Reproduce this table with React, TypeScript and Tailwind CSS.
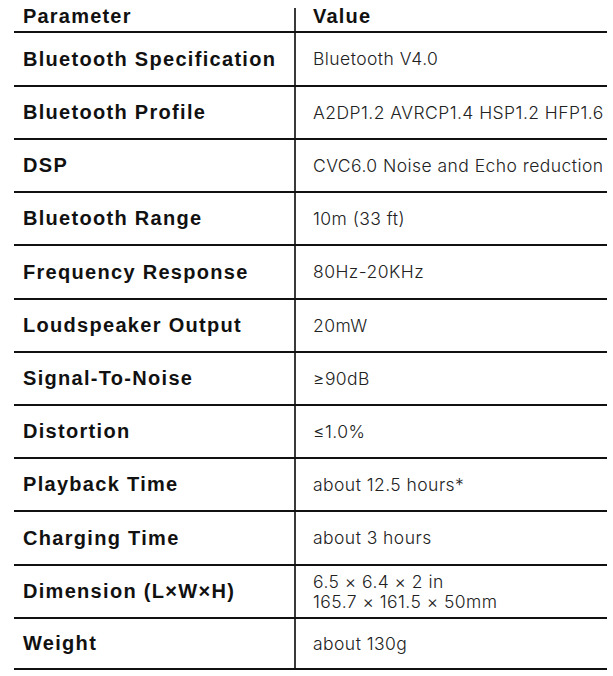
import React from "react";

type Row = { label: string; value: React.ReactNode; h: string };

const rows: Row[] = [
  { label: "Bluetooth Specification", value: "Bluetooth V4.0", h: "h-[54px]" },
  { label: "Bluetooth Profile", value: "A2DP1.2 AVRCP1.4 HSP1.2 HFP1.6", h: "h-[53px]" },
  { label: "DSP", value: "CVC6.0 Noise and Echo reduction", h: "h-[53px]" },
  { label: "Bluetooth Range", value: "10m (33 ft)", h: "h-[53px]" },
  { label: "Frequency Response", value: "80Hz-20KHz", h: "h-[54px]" },
  { label: "Loudspeaker Output", value: "20mW", h: "h-[53px]" },
  { label: "Signal-To-Noise", value: "≥90dB", h: "h-[53px]" },
  { label: "Distortion", value: "≤1.0%", h: "h-[53px]" },
  { label: "Playback Time", value: "about 12.5 hours*", h: "h-[53px]" },
  { label: "Charging Time", value: "about 3 hours", h: "h-[54px]" },
  {
    label: "Dimension (L×W×H)",
    value: (
      <>
        <div>6.5 × 6.4 × 2 in</div>
        <div>165.7 × 161.5 × 50mm</div>
      </>
    ),
    h: "h-[53px]",
  },
  { label: "Weight", value: "about 130g", h: "h-[53px]" },
];

export default function App() {
  return (
    <div className="w-[613px] h-[676px] bg-white overflow-hidden font-['Liberation_Sans',Arial,sans-serif]">
      <div className="ml-[14px] w-[593px] flex flex-col">
        <div className="flex h-[31px]">
          <div className="w-[282px] mt-2 border-r-2 border-[#3a3a3a] flex items-start">
            <span className="pl-[9px] -mt-[7px] text-[20px] font-bold text-[#111] tracking-[1.2px]">
              Parameter
            </span>
          </div>
          <div className="flex-1 pl-[17px] flex items-start">
            <span className="mt-[1px] text-[20px] font-bold text-[#111] tracking-[1.2px]">
              Value
            </span>
          </div>
        </div>
        {rows.map((r, i) => (
          <div
            key={i}
            className={`flex border-t-2 border-[#111] ${r.h} ${
              i === rows.length - 1 ? "border-b-2" : ""
            }`}
          >
            <div className="w-[282px] border-r-2 border-[#3a3a3a] flex items-center pl-[9px]">
              <span className="-mt-[1px] text-[20px] font-bold text-[#111] tracking-[1.3px] whitespace-nowrap">
                {r.label}
              </span>
            </div>
            <div className="flex-1 flex flex-col justify-center pl-[17px] font-['Inter',sans-serif] font-light text-[17.5px] leading-[20px] tracking-[0.45px] text-[#222] whitespace-nowrap overflow-hidden">
              {r.value}
            </div>
          </div>
        ))}
      </div>
    </div>
  );
}
